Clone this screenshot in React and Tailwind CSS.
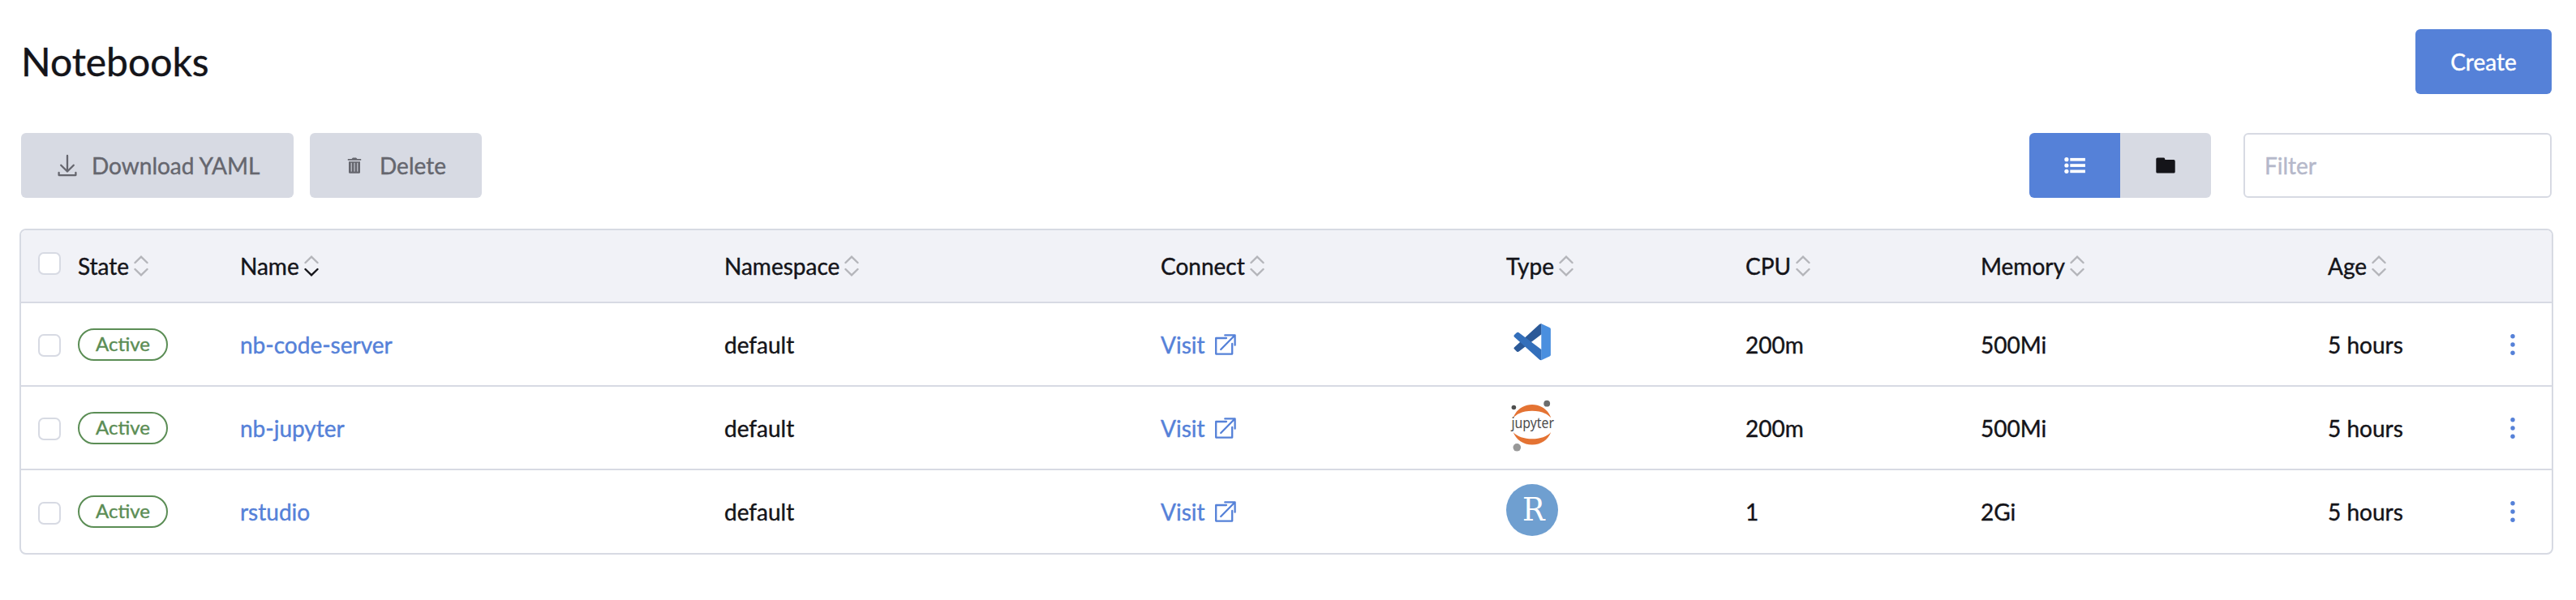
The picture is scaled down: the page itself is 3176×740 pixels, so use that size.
import React from "react";

const COLS =
  "grid grid-cols-[70px_200px_597px_538px_426px_295px_290px_428px_200px_1fr] items-center";

function DownloadIcon() {
  return (
    <svg width="24" height="28" viewBox="0 0 24 28" fill="none" stroke="currentColor" strokeWidth="2.300" strokeLinecap="round" strokeLinejoin="round">
      <path d="M12 2v19.5M4.2 13.8l7.8 7.7 7.8-7.7" />
      <path d="M1.6 23v3.1h20.8V23" />
    </svg>
  );
}

function TrashIcon() {
  return (
    <svg width="18" height="20" viewBox="0 0 18 20" fill="none">
      <path d="M0.8 1.9h4.7L7 0.4h4l1.5 1.5h4.7v1.9H0.8z" fill="currentColor" />
      <path d="M2 5.2h14v13.2a1.4 1.4 0 0 1-1.4 1.4H3.400a1.4 1.4 0 0 1-1.400-1.400z" fill="currentColor" />
      <path d="M5.200 6.800v10.800M9 6.800v10.800M12.800 6.800v10.800" stroke="#d7dae3" strokeWidth="1" />
    </svg>
  );
}

function ListIcon() {
  return (
    <svg width="26" height="20" viewBox="0 0 26 20" fill="currentColor">
      <circle cx="2.9" cy="2.700" r="2.600" />
      <circle cx="2.9" cy="10" r="2.600" />
      <circle cx="2.9" cy="17.300" r="2.600" />
      <rect x="7.300" y="0.900" width="18.600" height="3.700" />
      <rect x="7.300" y="8.200" width="18.600" height="3.700" />
      <rect x="7.300" y="15.500" width="18.600" height="3.700" />
    </svg>
  );
}

function FolderIcon() {
  return (
    <svg width="24" height="20" viewBox="0 0 24 20" fill="currentColor">
      <path d="M2 0.400h7.500a1.600 1.600 0 0 1 1.600 1.300l.3 1.300H22a1.700 1.700 0 0 1 1.700 1.700v13.200a1.700 1.700 0 0 1-1.700 1.700H2a1.700 1.700 0 0 1-1.700-1.700V2.100A1.700 1.700 0 0 1 2 0.400z" />
    </svg>
  );
}

function ExternalIcon() {
  return (
    <svg width="26" height="26" viewBox="0 0 26 26" fill="none" stroke="currentColor" strokeWidth="2.300" strokeLinecap="round" strokeLinejoin="round">
      <path d="M14 5H1.200v19.600h20V12" />
      <path d="M12.300 1.400h12.300v12.300M24.200 1.800L7.200 19" />
    </svg>
  );
}

function SortIcon({ down }) {
  return (
    <svg className="ml-1.5" width="18" height="26" viewBox="0 0 18 26" fill="none" strokeWidth="2.400" strokeLinecap="round">
      <path d="M1.500 9L9 1.700 16.500 9" stroke="#b4b5ba" />
      <path d="M1.500 17L9 24.300 16.500 17" stroke={down ? "#141419" : "#b4b5ba"} />
    </svg>
  );
}

function CodeLogo() {
  return (
    <svg width="64" height="64" viewBox="0 0 64 64">
      <path d="M9.900 38.400L40.700 10.200q1.200-1 2.900-.9v13L16 43.200q-1.500 1.300-3 .2l-3-2.800q-1.200-1-.1-2.200z" fill="#2b5998" />
      <path d="M9.900 25.400L40.700 53.300q1.200 1 2.900.8V41.300L16 20.400q-1.500-1.200-3-.1l-3 2.800q-1.200 1.100-.1 2.300z" fill="#336fbb" />
      <path d="M43.300 9.300l10.200 4.800q1.400.7 1.400 2v31.300q0 1.300-1.400 2L43.300 54.200z" fill="#4a8fdf" />
    </svg>
  );
}

function JupyterLogo() {
  return (
    <svg width="64" height="64" viewBox="0 0 64 64">
      <path d="M8.700 22.300C12 12.500 21.200 6 32 6s20 6.500 23.200 16.300C50.500 16.800 42 13.800 32 13.800S13.500 16.800 8.700 22.300z" fill="#e47333" />
      <path d="M8.700 40C12 49 21.200 55.600 32 55.600S52 49 55.200 40C50.500 45.500 42 48.300 32 48.300S13.500 45.500 8.700 40z" fill="#e47333" />
      <circle cx="9.400" cy="9.500" r="2.800" fill="#4e4e4e" />
      <circle cx="50.200" cy="4.700" r="3.900" fill="#6d6d6d" />
      <circle cx="13.300" cy="58.800" r="4.800" fill="#989898" />
      <text x="6.500" y="35" textLength="52.500" lengthAdjust="spacingAndGlyphs" fontSize="17.500" fill="#4e4e4e" className="font-['Noto_Sans',sans-serif] [-webkit-text-stroke:0]">
        jupyter
      </text>
    </svg>
  );
}

function RStudioLogo() {
  return (
    <svg width="64" height="64" viewBox="0 0 64 64">
      <circle cx="32" cy="32" r="32" fill="#6f9fd0" />
      <text x="20" y="44.700" textLength="27.500" lengthAdjust="spacingAndGlyphs" fontSize="39" fill="#fff" className="font-['DejaVu_Serif',serif] [-webkit-text-stroke:0]">
        R
      </text>
    </svg>
  );
}

function Checkbox({ className }) {
  return (
    <span className={`ml-[21px] block size-7 rounded-[7px] border-2 border-[#d7dae3] bg-white ${className}`} />
  );
}

const HEADERS = ["State", "Name", "Namespace", "Connect", "Type", "CPU", "Memory", "Age"];

const ROWS = [
  { name: "nb-code-server", Logo: CodeLogo, cpu: "200m", memory: "500Mi" },
  { name: "nb-jupyter", Logo: JupyterLogo, cpu: "200m", memory: "500Mi" },
  { name: "rstudio", Logo: RStudioLogo, cpu: "1", memory: "2Gi" },
];

function Row({ name, Logo, cpu, memory, last }) {
  return (
    <div className={`${COLS} ${last ? "h-[102px]" : "h-[103px] border-b-2 border-[#d7dae3]"}`}>
      <Checkbox className="mt-[3px]" />
      <div className="flex">
        <span className="flex h-10 w-[111px] items-center justify-center rounded-full border-2 border-[#5b8d55] pb-0.5 text-2xl text-[#5b8d55]">
          Active
        </span>
      </div>
      <a className="text-[#5581d8]">{name}</a>
      <span>default</span>
      <a className="flex items-center gap-3 text-[#5581d8]">
        Visit
        <ExternalIcon />
      </a>
      <div className="mb-[5px]">
        <Logo />
      </div>
      <span>{cpu}</span>
      <span>{memory}</span>
      <span>5 hours</span>
      <span className="text-[#5581d8]">
        <svg className="mr-[45px] ml-auto" width="6" height="28" viewBox="0 0 6 28" fill="currentColor">
          <circle cx="3" cy="3.700" r="2.700" />
          <circle cx="3" cy="14" r="2.700" />
          <circle cx="3" cy="24.300" r="2.700" />
        </svg>
      </span>
    </div>
  );
}

export default function App() {
  return (
    <div className="h-[740px] w-[3176px] bg-white pt-9 pr-7 pl-6 font-['Lato',sans-serif] text-[28px] leading-[34px] text-[#141419] [-webkit-text-stroke:0.4px]">
      <header className="flex h-20 items-center justify-between pr-0.5 pl-0.5">
        <h1 className="text-5xl">Notebooks</h1>
        <button className="h-20 w-[168px] rounded-md bg-[#5581d8] text-white">Create</button>
      </header>

      <div className="mt-12 flex h-20 items-stretch pr-0.5 pl-0.5">
        <button className="flex w-[336px] items-center rounded-md bg-[#d7dae3] pl-[45px] text-[#65666e]">
          <DownloadIcon />
          <span className="ml-[18px]">Download YAML</span>
        </button>
        <button className="ml-5 flex w-[212px] items-center rounded-md bg-[#d7dae3] pl-[46px] text-[#65666e]">
          <TrashIcon />
          <span className="ml-[22px]">Delete</span>
        </button>
        <div className="ml-auto flex overflow-hidden rounded-md">
          <button className="flex w-28 items-center justify-center bg-[#5581d8] text-white">
            <ListIcon />
          </button>
          <button className="flex w-28 items-center justify-center bg-[#d7dae3]">
            <FolderIcon />
          </button>
        </div>
        <div className="ml-10 flex w-[380px] items-center rounded-md border-2 border-[#d7dae3] pl-6 text-[#b5b8ca]">
          Filter
        </div>
      </div>

      <main className="mt-[38px] overflow-hidden rounded-lg border-2 border-[#d7dae3]">
        <div className={`${COLS} h-[90px] border-b-2 border-[#d7dae3] bg-[#f1f2f7]`}>
          <Checkbox className="mb-[6px]" />
          {HEADERS.map((h) => (
            <div key={h} className="flex items-center">
              {h}
              <SortIcon down={h === "Name"} />
            </div>
          ))}
        </div>
        {ROWS.map((r, i) => (
          <Row key={r.name} {...r} last={i === ROWS.length - 1} />
        ))}
      </main>
    </div>
  );
}
